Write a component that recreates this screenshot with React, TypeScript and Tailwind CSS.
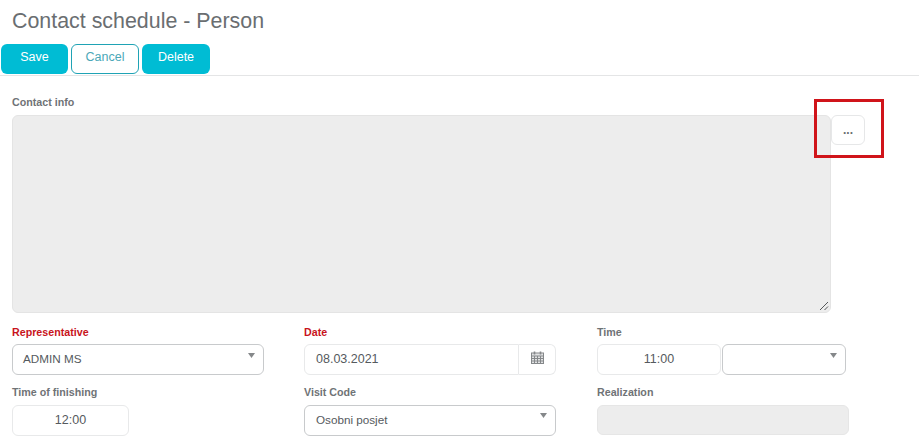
const label = "block h-[13px] text-[10.7px] leading-[13px] font-bold text-[#6f7376]";
const reqLabel = "block h-[13px] text-[10.7px] leading-[13px] font-bold text-[#c8141c]";
const field = "h-[31px] bg-white rounded-[6px] text-[#555a5e] flex items-center";

function Select({ value, className, caret = "top-[8px]" }: { value?: string; className: string; caret?: string }) {
  return (
    <div className={`${field} relative border border-[#c8cacc] pl-[10px] pb-[1px] text-[11.7px] ${className}`}>
      {value}
      <svg className={`absolute right-[8px] ${caret}`} width="7" height="5" viewBox="0 0 7 5">
        <path d="M0 0h7L3.5 5z" fill="#85888a" />
      </svg>
    </div>
  );
}

function Calendar() {
  return (
    <svg width="13" height="13" viewBox="0 0 13 13" fill="none" stroke="#85888a" strokeWidth="1">
      <rect x="0.5" y="2" width="12" height="10.5" fill="#e2e3e4" />
      <path d="M0.5 5h12M0.5 7.5h12M0.5 10h12M3.5 5v7.5M6.5 5v7.5M9.5 5v7.5" />
      <path d="M3.5 0.5v3M9.5 0.5v3" strokeWidth="1.6" />
    </svg>
  );
}

export default function App() {
  return (
    <div className="relative w-[919px] h-[444px] overflow-hidden bg-white font-['Liberation_Sans',Arial,sans-serif]">
      <h1 className="pl-[12px] pt-[9px] h-[44px] text-[21.4px] leading-[25px] text-[#6a6e71]">
        Contact schedule - Person
      </h1>
      <div className="flex gap-[3px] pl-[1px] h-[32px] border-b border-[#e4e5e6] text-[12.5px]">
        <button className="w-[67px] h-[30px] pb-[3px] rounded-[6px] bg-[#00bcd4] text-white">Save</button>
        <button className="w-[68px] h-[30px] pb-[3px] rounded-[6px] border border-[#1fa3b5] bg-white text-[#4ba8b8]">Cancel</button>
        <button className="w-[68px] h-[30px] pb-[3px] rounded-[6px] bg-[#00bcd4] text-white">Delete</button>
      </div>

      <div className="pl-[12px] pt-[20px]">
        <label className={`${label} mb-[6px]`}>Contact info</label>
        <div className="flex items-start">
          <div className="relative w-[819px] h-[198px] bg-[#ededed] border border-[#e4e4e4] rounded-[6px]">
            <svg className="absolute right-[1px] bottom-[1px]" width="10" height="10" viewBox="0 0 10 10" stroke="#55585a" strokeWidth="1">
              <path d="M1 9L9 1M5.5 9L9 5.5" />
            </svg>
          </div>
          <button className="w-[34px] h-[30px] bg-white border border-[#e6e7e8] rounded-[6px] text-[12px] leading-[12px] font-bold text-[#6a6e71]">...</button>
        </div>
      </div>

      <div className="grid grid-cols-[252px_253px_252px] gap-x-[40px] gap-y-[11px] pl-[12px] pt-[13px]">
        <div>
          <label className={`${reqLabel} mb-[5px]`}>Representative</label>
          <Select value="ADMIN MS" className="w-full" />
        </div>
        <div>
          <label className={`${reqLabel} mb-[5px]`}>Date</label>
          <div className="flex text-[12.5px]">
            <div className={`${field} w-[215px] border border-[#e8e9ea] rounded-r-none pl-[11px]`}>08.03.2021</div>
            <div className={`${field} w-[37px] justify-center border border-l-0 border-[#e8e9ea] rounded-l-none pb-[5px]`}>
              <Calendar />
            </div>
          </div>
        </div>
        <div>
          <label className={`${label} mb-[5px]`}>Time</label>
          <div className="flex gap-[1px] text-[12.5px]">
            <div className={`${field} w-[124px] justify-center border border-[#e8e9ea]`}>11:00</div>
            <Select className="w-[124px]" />
          </div>
        </div>
        <div>
          <label className={`${label} mb-[6px]`}>Time of finishing</label>
          <div className={`${field} w-[117px] h-[30px] justify-center border border-[#e8e9ea] text-[12.5px]`}>12:00</div>
        </div>
        <div>
          <label className={`${label} mb-[6px]`}>Visit Code</label>
          <Select value="Osobni posjet" caret="top-[7px]" className="w-[252px] h-[30px] pl-[11px]" />
        </div>
        <div>
          <label className={`${label} mb-[6px]`}>Realization</label>
          <div className="h-[30px] bg-[#ededed] rounded-[6px] border border-[#e6e6e6]" />
        </div>
      </div>

      <div className="absolute left-[814px] top-[99px] w-[70px] h-[59px] border-[3px] border-[#d0141a]" />
    </div>
  );
}
